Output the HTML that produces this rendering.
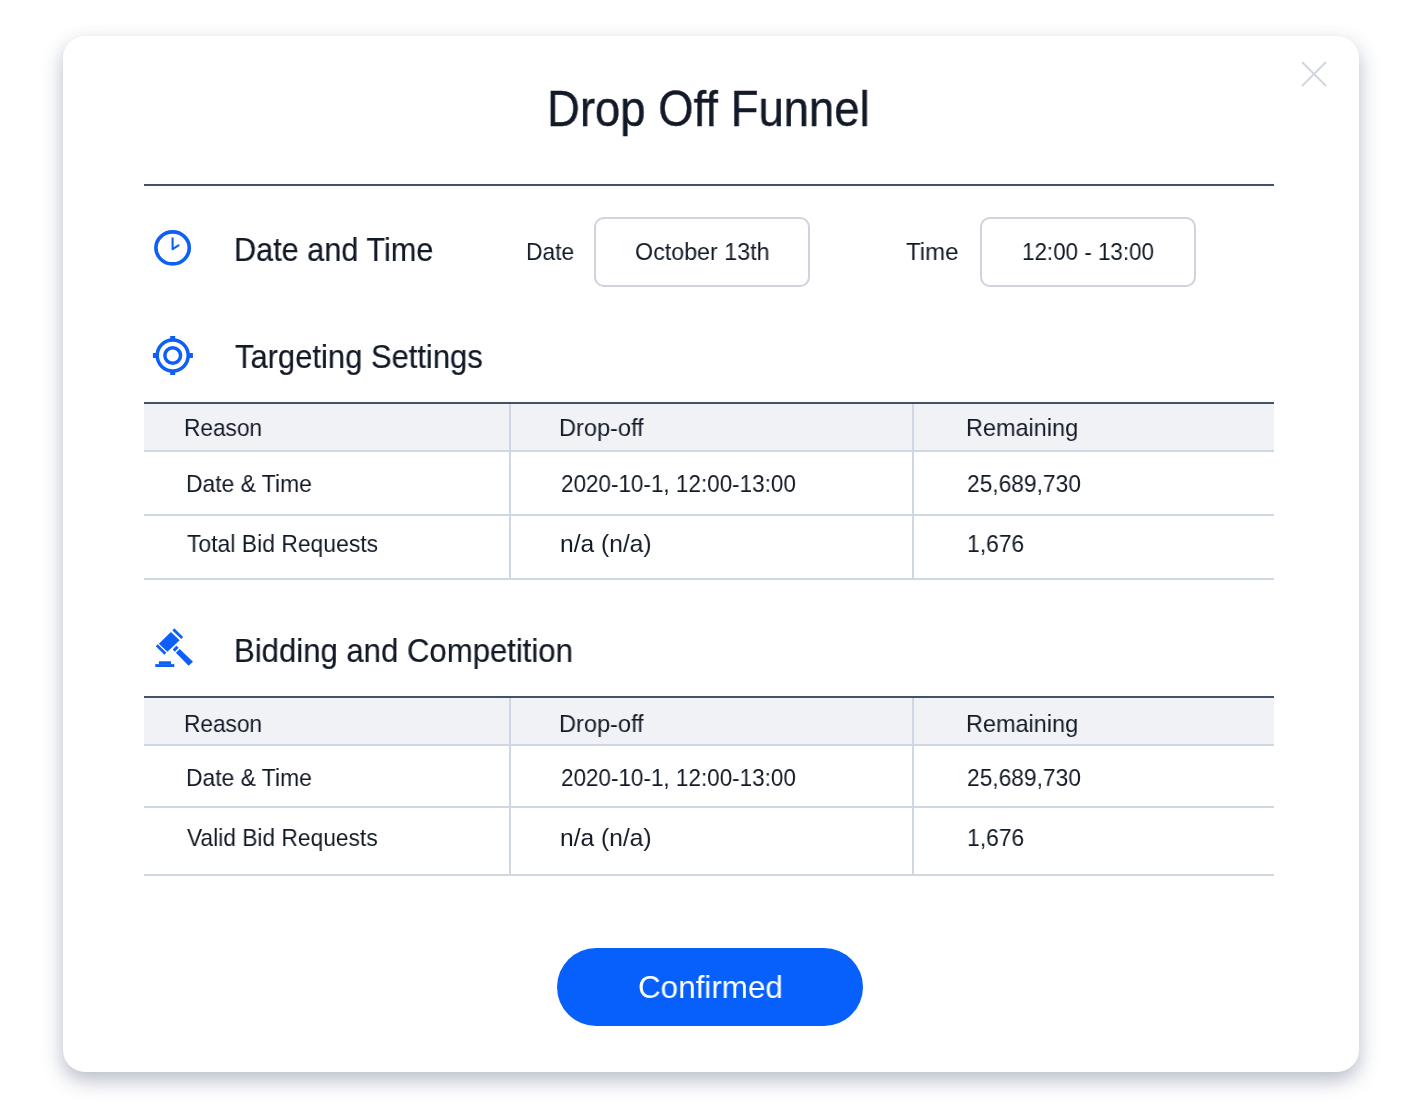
<!DOCTYPE html>
<html><head><meta charset="utf-8">
<style>
html,body{margin:0;padding:0;background:#ffffff;}
body{width:1420px;height:1112px;position:relative;overflow:hidden;font-family:"Liberation Sans",sans-serif;}
.card{position:absolute;left:63px;top:36px;width:1296px;height:1036px;background:#fff;border-radius:22px;box-shadow:0 8px 20px rgba(40,55,90,0.34);}
.t{position:absolute;white-space:nowrap;transform-origin:0 0;will-change:transform;}
.ln{position:absolute;}
.box{position:absolute;box-sizing:border-box;border:2px solid #cfd3de;border-radius:10px;background:#fff;}
.btn{position:absolute;left:557px;top:948px;width:306px;height:78px;border-radius:39px;background:#0760fb;}
</style></head><body>
<div class="card"></div>
<!-- divider -->
<div class="ln" style="left:144px;top:184px;width:1130px;height:2px;background:#44516a"></div>
<!-- date/time boxes -->
<div class="box" style="left:594px;top:217px;width:216px;height:70px"></div>
<div class="box" style="left:980px;top:217px;width:216px;height:70px"></div>
<!-- table 1 -->
<div class="ln" style="left:144px;top:402px;width:1130px;height:2px;background:#44516a"></div>
<div class="ln" style="left:144px;top:404px;width:1130px;height:46px;background:#f0f2f5"></div>
<div class="ln" style="left:144px;top:450px;width:1130px;height:2px;background:#cfd7e2"></div>
<div class="ln" style="left:144px;top:514px;width:1130px;height:2px;background:#cfd7e2"></div>
<div class="ln" style="left:144px;top:578px;width:1130px;height:2px;background:#cfd7e2"></div>
<div class="ln" style="left:509px;top:404px;width:2px;height:174px;background:#cfd7e2"></div>
<div class="ln" style="left:912px;top:404px;width:2px;height:174px;background:#cfd7e2"></div>
<!-- table 2 -->
<div class="ln" style="left:144px;top:696px;width:1130px;height:2px;background:#44516a"></div>
<div class="ln" style="left:144px;top:698px;width:1130px;height:46px;background:#f0f2f5"></div>
<div class="ln" style="left:144px;top:744px;width:1130px;height:2px;background:#cfd7e2"></div>
<div class="ln" style="left:144px;top:806px;width:1130px;height:2px;background:#cfd7e2"></div>
<div class="ln" style="left:144px;top:874px;width:1130px;height:2px;background:#cfd7e2"></div>
<div class="ln" style="left:509px;top:698px;width:2px;height:176px;background:#cfd7e2"></div>
<div class="ln" style="left:912px;top:698px;width:2px;height:176px;background:#cfd7e2"></div>
<div class="btn"></div>
<svg style="position:absolute;left:0;top:0" width="1420" height="1112" viewBox="0 0 1420 1112">
 <!-- close -->
 <g stroke="#d0d6e0" stroke-width="1.9" stroke-linecap="butt">
  <line x1="1302" y1="62" x2="1326" y2="86"/>
  <line x1="1326" y1="62" x2="1302" y2="86"/>
 </g>
 <!-- clock -->
 <ellipse cx="172.6" cy="247.9" rx="16.7" ry="16.0" fill="none" stroke="#0d5ff7" stroke-width="3.6"/>
 <path d="M172.6 238.3 V249.2 L178.5 245.4" fill="none" stroke="#0d5ff7" stroke-width="2.1" stroke-linecap="round" stroke-linejoin="round"/>
 <!-- target -->
 <g fill="#0d5ff7">
  <circle cx="172.7" cy="355.5" r="15.5" fill="none" stroke="#0d5ff7" stroke-width="3.5"/>
  <circle cx="172.7" cy="355.5" r="7.85" fill="none" stroke="#0d5ff7" stroke-width="3.5"/>
  <rect x="170.2" y="336" width="5" height="4"/>
  <rect x="170.2" y="371" width="5" height="4"/>
  <rect x="152.9" y="353" width="4" height="5"/>
  <rect x="188.9" y="353" width="4" height="5"/>
 </g>
 <!-- gavel -->
 <g transform="translate(140,615) scale(0.062950)" fill="#0d5ff7">
  <polygon points="300,455 490,270 630,400 435,585"/>
  <polygon points="515,245 545,212 685,348 655,380"/>
  <polygon points="250,495 282,465 418,600 388,633"/>
  <polygon points="518,548 578,490 615,522 555,585"/>
  <polygon points="570,600 630,542 842,742 772,808"/>
  <rect x="300" y="735" width="192" height="47"/>
  <rect x="243" y="780" width="302" height="46"/>
 </g>
</svg>
<div class="t" style="left:547.07px;top:84.16px;font-size:49.4px;line-height:49.4px;color:#131a27;transform:scaleX(0.9207);-webkit-text-stroke:0.4px #131a27">Drop Off Funnel</div>
<div class="t" style="left:233.99px;top:232.85px;font-size:33px;line-height:33px;color:#131a27;transform:scaleX(0.9290);-webkit-text-stroke:0.2px #131a27">Date and Time</div>
<div class="t" style="left:526.13px;top:239.96px;font-size:24.6px;line-height:24.6px;color:#131a27;transform:scaleX(0.9272)">Date</div>
<div class="t" style="left:634.91px;top:240.16px;font-size:24.6px;line-height:24.6px;color:#131a27;transform:scaleX(0.9464)">October 13th</div>
<div class="t" style="left:906.47px;top:240.16px;font-size:24.6px;line-height:24.6px;color:#131a27;transform:scaleX(0.9784)">Time</div>
<div class="t" style="left:1021.80px;top:240.16px;font-size:24.6px;line-height:24.6px;color:#131a27;transform:scaleX(0.9109)">12:00 - 13:00</div>
<div class="t" style="left:235.12px;top:339.75px;font-size:33px;line-height:33px;color:#131a27;transform:scaleX(0.9377);-webkit-text-stroke:0.2px #131a27">Targeting Settings</div>
<div class="t" style="left:184.14px;top:416.16px;font-size:24.6px;line-height:24.6px;color:#131a27;transform:scaleX(0.9211)">Reason</div>
<div class="t" style="left:558.67px;top:416.16px;font-size:24.6px;line-height:24.6px;color:#131a27;transform:scaleX(0.9578)">Drop-off</div>
<div class="t" style="left:966.08px;top:416.16px;font-size:24.6px;line-height:24.6px;color:#131a27;transform:scaleX(0.9535)">Remaining</div>
<div class="t" style="left:185.53px;top:472.16px;font-size:24.6px;line-height:24.6px;color:#131a27;transform:scaleX(0.9293)">Date &amp; Time</div>
<div class="t" style="left:560.78px;top:472.16px;font-size:24.6px;line-height:24.6px;color:#131a27;transform:scaleX(0.9134)">2020-10-1, 12:00-13:00</div>
<div class="t" style="left:966.56px;top:472.16px;font-size:24.6px;line-height:24.6px;color:#131a27;transform:scaleX(0.9251)">25,689,730</div>
<div class="t" style="left:186.90px;top:532.16px;font-size:24.6px;line-height:24.6px;color:#131a27;transform:scaleX(0.9318)">Total Bid Requests</div>
<div class="t" style="left:560.38px;top:532.16px;font-size:24.6px;line-height:24.6px;color:#131a27;transform:scaleX(0.9982)">n/a (n/a)</div>
<div class="t" style="left:966.66px;top:532.16px;font-size:24.6px;line-height:24.6px;color:#131a27;transform:scaleX(0.9297)">1,676</div>
<div class="t" style="left:234.05px;top:634.05px;font-size:33px;line-height:33px;color:#131a27;transform:scaleX(0.9426);-webkit-text-stroke:0.2px #131a27">Bidding and Competition</div>
<div class="t" style="left:184.14px;top:712.16px;font-size:24.6px;line-height:24.6px;color:#131a27;transform:scaleX(0.9211)">Reason</div>
<div class="t" style="left:558.67px;top:712.16px;font-size:24.6px;line-height:24.6px;color:#131a27;transform:scaleX(0.9578)">Drop-off</div>
<div class="t" style="left:966.08px;top:712.16px;font-size:24.6px;line-height:24.6px;color:#131a27;transform:scaleX(0.9535)">Remaining</div>
<div class="t" style="left:185.53px;top:766.16px;font-size:24.6px;line-height:24.6px;color:#131a27;transform:scaleX(0.9293)">Date &amp; Time</div>
<div class="t" style="left:560.78px;top:766.16px;font-size:24.6px;line-height:24.6px;color:#131a27;transform:scaleX(0.9134)">2020-10-1, 12:00-13:00</div>
<div class="t" style="left:966.56px;top:766.16px;font-size:24.6px;line-height:24.6px;color:#131a27;transform:scaleX(0.9251)">25,689,730</div>
<div class="t" style="left:187.31px;top:826.16px;font-size:24.6px;line-height:24.6px;color:#131a27;transform:scaleX(0.9257)">Valid Bid Requests</div>
<div class="t" style="left:560.38px;top:826.16px;font-size:24.6px;line-height:24.6px;color:#131a27;transform:scaleX(0.9982)">n/a (n/a)</div>
<div class="t" style="left:966.66px;top:826.16px;font-size:24.6px;line-height:24.6px;color:#131a27;transform:scaleX(0.9297)">1,676</div>
<div class="t" style="left:637.83px;top:970.70px;font-size:32px;line-height:32px;color:#ffffff;transform:scaleX(0.9815)">Confirmed</div>
</body></html>
